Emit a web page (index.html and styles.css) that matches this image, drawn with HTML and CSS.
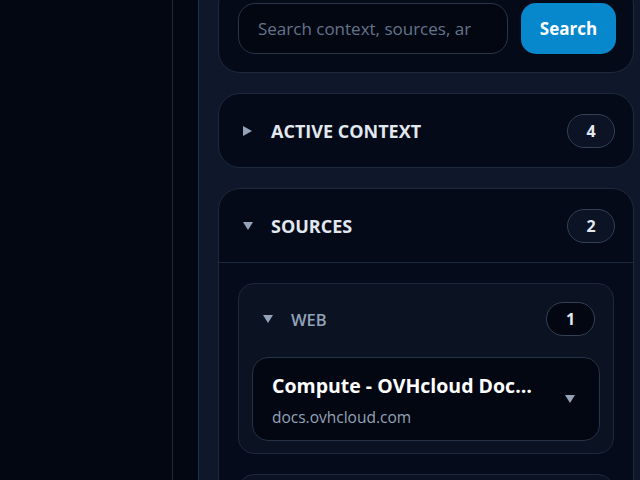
FILE: index.html
```html
<!DOCTYPE html>
<html lang="en">
<head>
    <meta charset="UTF-8">
    <title>Context panel</title>
    <link rel="stylesheet" href="styles.css">
</head>
<body>
    <div class="layout">
        <main class="main"></main>
        <div class="gutter"></div>
        <aside class="panel">
            <div class="panel-scroll">
                <div class="card search-card">
                    <input type="text" class="search-input" placeholder="Search context, sources, artifacts">
                    <button class="search-button">Search</button>
                </div>

                <div class="card">
                    <div class="card-header">
                        <span class="caret caret-right"></span>
                        <span class="card-title">Active context</span>
                        <span class="badge">4</span>
                    </div>
                </div>

                <div class="card">
                    <div class="card-header">
                        <span class="caret caret-down"></span>
                        <span class="card-title">Sources</span>
                        <span class="badge">2</span>
                    </div>
                    <div class="card-body">
                        <div class="group">
                            <div class="group-header">
                                <span class="caret caret-down"></span>
                                <span class="group-title">Web</span>
                                <span class="badge badge-dark">1</span>
                            </div>
                            <div class="source">
                                <div class="source-text">
                                    <div class="source-title">Compute - OVHcloud Documentation</div>
                                    <div class="source-host">docs.ovhcloud.com</div>
                                </div>
                                <span class="caret caret-down"></span>
                            </div>
                        </div>
                        <div class="group">
                            <div class="group-header">
                                <span class="caret caret-down"></span>
                                <span class="group-title">Files</span>
                                <span class="badge badge-dark">1</span>
                            </div>
                        </div>
                    </div>
                </div>
            </div>
        </aside>
    </div>
</body>
</html>
```

FILE: styles.css
```css
* {
    box-sizing: border-box;
}
html, body {
    height: 100%;
}
body {
    margin: 0;
    background: #030712;
    font-family: "Open Sans", "Noto Sans", sans-serif;
    color: #e2e8f0;
    overflow: hidden;
}
.layout {
    display: flex;
    height: 100%;
}
.main {
    width: 173px;
    border-right: 1px solid #1e293b;
}
.gutter {
    width: 25px;
}
.panel {
    flex: 1;
    background: #0f172a;
    border-left: 1px solid #243046;
    padding: 0 6px 0 19px;
    overflow: hidden;
}
.panel-scroll {
    margin-top: -17px;
    display: flex;
    flex-direction: column;
    gap: 20px;
}
.card {
    background: #050a18;
    border: 1px solid #1e293b;
    border-radius: 22px;
    overflow: hidden;
}
.search-card {
    display: flex;
    gap: 13px;
    padding: 19px 17px 18px 19px;
}
.search-input {
    width: 270px;
    height: 51px;
    padding: 0 36px 0 19px;
    background: #030712;
    border: 1px solid #2a3549;
    border-radius: 17px;
    color: #e2e8f0;
    font-family: inherit;
    font-size: 17px;
    outline: none;
}
.search-input::placeholder {
    color: #64748b;
}
.search-button {
    flex: 1;
    height: 51px;
    background: #0788cc;
    border: none;
    border-radius: 15px;
    color: #fff;
    font-family: inherit;
    font-weight: 700;
    font-size: 17px;
    cursor: pointer;
}
.card-header {
    display: flex;
    align-items: center;
    height: 73px;
    padding: 0 18px 0 24px;
}

/* small triangles used as expand/collapse markers */
.caret {
    flex: none;
    width: 0;
    height: 0;
    margin-right: 18px;
    border-style: solid;
    border-color: transparent;
}
.caret-right {
    border-width: 5px 0 5px 9px;
    border-left-color: #94a3b8;
    margin-right: 19px;
}
.caret-down {
    border-width: 8px 5px 0 5px;
    border-top-color: #94a3b8;
}
.card-title {
    flex: 1;
    text-transform: uppercase;
    font-weight: 700;
    font-size: 18px;
    color: #e2e8f0;
}
.badge {
    width: 48px;
    height: 34px;
    border: 1px solid #334155;
    border-radius: 17px;
    background: #0b1324;
    display: flex;
    align-items: center;
    justify-content: center;
    font-weight: 700;
    font-size: 16px;
    color: #e2e8f0;
}
.badge-dark {
    width: 49px;
    background: #030712;
}
.card-body {
    border-top: 1px solid #1e293b;
    background: #060b1b;
    padding: 20px 19px;
    display: flex;
    flex-direction: column;
    gap: 20px;
}
.group {
    background: #0b1222;
    border: 1px solid #1e293b;
    border-radius: 16px;
    padding: 18px 13px 12px;
}
.group-header {
    display: flex;
    align-items: center;
    height: 34px;
    padding: 0 5px 0 11px;
    margin-bottom: 21px;
}
.group-title {
    flex: 1;
    text-transform: uppercase;
    font-weight: 600;
    font-size: 16.5px;
    color: #94a3b8;
}
.source {
    display: flex;
    align-items: center;
    height: 84px;
    padding: 0 24px 0 19px;
    background: #030712;
    border: 1px solid #263246;
    border-radius: 16px;
}
.source-text {
    flex: 1;
    min-width: 0;
    align-self: flex-start;
    padding-top: 16px;
}
.source-title {
    max-width: 270px;
    white-space: nowrap;
    overflow: hidden;
    text-overflow: ellipsis;
    font-weight: 700;
    font-size: 19.5px;
    line-height: 24px;
    color: #fff;
}
.source-host {
    font-size: 15.5px;
    line-height: 20px;
    color: #94a3b8;
    margin-top: 9px;
}
.source .caret {
    margin-right: 0;
}
```
